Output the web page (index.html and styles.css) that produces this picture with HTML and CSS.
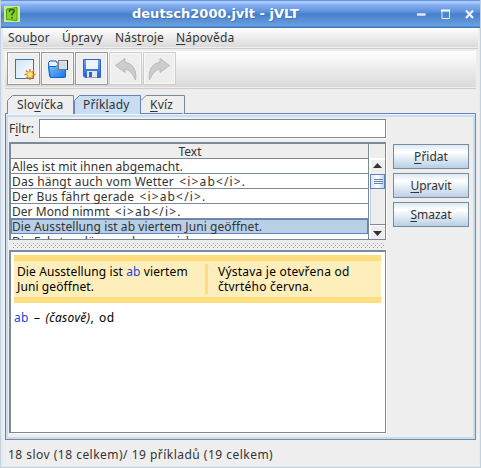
FILE: index.html
```html
<!DOCTYPE html>
<html lang="cs">
<head>
<meta charset="utf-8">
<title>deutsch2000.jvlt - jVLT</title>
<link rel="stylesheet" href="styles.css">
</head>
<body>
<div class="window">
  <header class="titlebar">
    <svg class="app-icon" width="16" height="16" viewBox="0 0 16 16"><rect width="16" height="16" fill="#c5ef8c"/><path d="M2.500 3L13 1.500V14.500L2.500 13.500Z" fill="#85d32a" stroke="#529914"/><path d="M5.500 6V4.200Q8 3 10 4.200V6L8 8V9.500M8 11V12.500" fill="none" stroke="#2f5210" stroke-width="1.500"/></svg>
    <h1 class="title">deutsch2000.jvlt - jVLT</h1>
    <svg class="controls" width="60" height="12" viewBox="0 0 60 12"><path d="M3 6.500H9.500" stroke="#e5e9ef" stroke-width="2.500" stroke-linecap="round"/><path d="M27 3V10.500H34.500V3" fill="none" stroke="#e8ecf0"/><path d="M26 2.500H35" stroke="#fff" stroke-width="2"/><path d="M51 2.500L58 10M58 2.500L51 10" stroke="#f0f2f5" stroke-width="2.200"/></svg>
  </header>
  <nav class="menubar">
    <span class="m1">Sou<u>b</u>or</span><span class="m2">Úp<u>r</u>avy</span><span class="m3">Nás<u>t</u>roje</span><span class="m4"><u>N</u>ápověda</span>
  </nav>
  <div class="toolbar">
    <button class="tool"><svg width="29" height="29" viewBox="0 0 29 29"><defs><linearGradient id="pg" x2="1" y2="1"><stop stop-color="#cfe4f6"/><stop offset="1" stop-color="#fff"/></linearGradient></defs><rect x="6.500" y="5.500" width="18" height="19" fill="url(#pg)" stroke="#3a74ae"/><path d="M21 15v11M15.500 20.500h11M17 16.500l8 8M25 16.500l-8 8" stroke="#d87a20" stroke-width="1.500"/><circle cx="21" cy="20.500" r="3" fill="#ffe477" stroke="#f2a33a"/></svg></button>
    <button class="tool"><svg width="29" height="29" viewBox="0 0 29 29"><defs><linearGradient id="fg" x2="1" y2="1"><stop stop-color="#7cc6ff"/><stop offset="1" stop-color="#1a74e0"/></linearGradient></defs><path d="M5.500 8.500L7 7H13L14 9H22.500V23L21 23.500H8L6.500 22Z" fill="#e8f3ff" stroke="#0758c5"/><path d="M5.500 12.500H13L15 10.500H22.500V22L21 23.500H7.500Z" fill="url(#fg)" stroke="#1262cc"/><rect x="15.500" y="6.500" width="9" height="9" fill="#d9e6f2" fill-opacity=".9" stroke="#777"/><path d="M24.500 6V16" stroke="#333"/></svg></button>
    <button class="tool"><svg width="29" height="29" viewBox="0 0 29 29"><defs><linearGradient id="sg" x2="0" y2="1"><stop stop-color="#68a0ff"/><stop offset="1" stop-color="#2460d5"/></linearGradient></defs><path d="M6.500 5.500H23.500V23.500H8L6.500 22Z" fill="url(#sg)" stroke="#3263c4"/><rect x="9" y="6" width="12" height="9" fill="#eef5ff"/><rect x="10" y="17" width="10" height="6.500" fill="#e5e5ee"/><rect x="12" y="18" width="3" height="5" fill="#2d61c9"/></svg></button>
    <button class="tool off"><svg width="29" height="29" viewBox="0 0 29 29"><path d="M4.500 11.500L14 4.500V8.500C22 9 26 17 24.500 26C22 20 19 16 14 15V18.500Z" fill="#cdcdcd" stroke="#b8b8b8"/></svg></button>
    <button class="tool off"><svg width="29" height="29" viewBox="0 0 29 29"><path d="M24.500 11.500L15 4.500V8.500C7 9 3 17 4.500 26C7 20 10 16 15 15V18.500Z" fill="#cdcdcd" stroke="#b8b8b8"/></svg></button>
  </div>
  <div class="tabs">
    <div class="tab t1"><svg width="67" height="19"><path class="edge" d="M.5 19V5.500L5.500.500H66.500V19"/></svg><span>Slo<u>v</u>íčka</span></div>
    <div class="tab t2"><svg width="67" height="19"><path class="edge on" d="M.5 19V5.500L5.500.500H66.500V19"/></svg><span>Přík<u>l</u>ady</span></div>
    <div class="tab t3"><svg width="44" height="19"><path class="edge" d="M0 5.500L5 .500H43.500V19"/></svg><span><u>K</u>víz</span></div>
  </div>
  <main class="panel">
    <section class="left">
      <div class="filter"><label>F<u>i</u>ltr:</label><div class="input"></div></div>
      <div class="table">
        <div class="rows">
          <div class="head">Text</div>
          <div class="row">Alles ist mit ihnen abgemacht.</div>
          <div class="row wide">Das hängt auch vom Wetter <span class="tag">&lt;i&gt;ab&lt;/i&gt;.</span></div>
          <div class="row wide">Der Bus fährt gerade <span class="tag">&lt;i&gt;ab&lt;/i&gt;.</span></div>
          <div class="row">Der Mond nimmt <span class="tag">&lt;i&gt;ab&lt;/i&gt;.</span></div>
          <div class="row sel">Die Ausstellung ist ab viertem Juni geöffnet.</div>
          <div class="row">Die Fahrt verlängern lassen sich.</div>
        </div>
        <div class="scroll">
          <div class="corner"></div>
          <div class="arrow"><svg width="15" height="14"><path d="M3 9L7.500 4L12 9Z" fill="#333"/></svg></div>
          <div class="thumb"></div>
          <div class="track"></div>
          <div class="arrow down"><svg width="15" height="14"><path d="M3 6L7.500 11L12 6Z" fill="#333"/></svg></div>
        </div>
      </div>
      <div class="splitter"><svg width="376" height="6"><defs><pattern id="dots" width="4" height="4" patternUnits="userSpaceOnUse"><rect width="1" height="1" fill="#9a9a9a"/><rect x="2" y="2" width="1" height="1" fill="#9a9a9a"/></pattern></defs><rect x="3" width="373" height="5" fill="url(#dots)"/></svg></div>
      <div class="detail">
        <div class="example">
          <p class="de">Die Ausstellung ist <b>ab</b> viertem<br>Juni geöffnet.</p>
          <p class="cs">Výstava je otevřena od<br>čtvrtého června.</p>
        </div>
        <p class="entry"><b>ab</b> – <i>(časově)</i>, od</p>
      </div>
    </section>
    <aside class="actions">
      <button class="btn"><u>P</u>řidat</button>
      <button class="btn"><u>U</u>pravit</button>
      <button class="btn"><u>S</u>mazat</button>
    </aside>
  </main>
  <footer class="status">18 slov (18 celkem)/ 19 příkladů (19 celkem)</footer>
</div>
</body>
</html>
```

FILE: styles.css
```css
* { box-sizing: border-box; }
body { margin: 0; font: 12px/15px "Noto Sans", sans-serif; color: #333; }
p, h1 { margin: 0; }
u { text-decoration: underline; text-underline-offset: 2px; text-decoration-thickness: 1px; text-decoration-skip-ink: none; }
button { font: inherit; color: inherit; padding: 0; }
.window { width: 481px; height: 468px; background: #eee; border: solid #c3d2e1; border-width: 0 1px 1px; box-shadow: inset 2px -1px #e3eaf1, inset -1px 0 #e3eaf1; overflow: hidden; }
.titlebar { height: 28px; margin: 0 -1px; padding: 0 6px 0 4px; display: flex; align-items: center; background: linear-gradient(#6795dd 0 1px, #a6c8fb 1px 3px, #85aeee 5px, #5b91dd 12px, #477fc9 14px, #6aa0e2 26px, #3f77bb 27px); }
.app-icon { flex: none; }
.title { flex: 1; padding-right: 4px; text-align: center; white-space: nowrap; font: bold 13px/28px "DejaVu Sans", sans-serif; color: #fff; text-shadow: 1px 1px #4475b5; }
.controls { flex: none; }
.menubar { height: 21px; margin: 0 2px; padding: 2px 0 0 5px; display: flex; letter-spacing: .15px; background: linear-gradient(#fff, #dadada 19px, #eee 19px 20px, #ccc 20px); }
.menubar span { white-space: nowrap; }
.m1 { width: 54px; } .m2 { width: 53px; } .m3 { width: 61px; }
.toolbar { height: 38px; margin: 2px 4px 0; padding: 1px 0 0 2px; display: flex; gap: 1px; background: linear-gradient(#fff, #dadada 36px, #eee 36px 37px, #ccc 37px); }
.tool { width: 33px; height: 33px; border: 1px solid #999; background: #eee; box-shadow: inset 0 0 0 1px #f8f8f8; display: grid; place-items: center; }
.tool.off { border-color: #ccc; }
.tabs { height: 19px; margin: 6px 0 0 6px; display: flex; letter-spacing: .2px; }
.tab { position: relative; height: 19px; }
.tab svg { display: block; }
.tab span { position: absolute; left: 10px; top: 2px; white-space: nowrap; }
.t2 span, .t3 span { left: 9px; }
.edge { fill: #eee; stroke: #7a8a99; }
.edge.on { fill: #c8ddf2; stroke: #6382bf; }
.panel { margin: -1px 4px 0; height: 327px; display: flex; border: 1px solid #6382bf; padding: 3px 5px 0 3px; gap: 6px; box-shadow: inset 0 1px #eef5fc, inset 2px 3px #c8ddf2, inset -2px -2px #c8ddf2; border-right-color: #7a8a99; border-bottom-color: #7a8a99; }
.left { width: 378px; }
.filter { display: flex; height: 21px; padding-top: 2px; margin-bottom: 4px; }
.filter label { width: 30px; padding-top: 2px; }
.input { width: 348px; height: 19px; background: #fff; border: 1px solid #7a8a99; box-shadow: 1px 1px #fff; margin-right: 1px; }
.table { width: 377px; height: 98px; border: 1px solid #7a8a99; border-width: 2px 1px 1px 2px; box-shadow: 1px 1px #fff; display: flex; background: #fff; overflow: hidden; }
.rows { width: 359px; border-right: 1px solid #7a8a99; white-space: nowrap; overflow: hidden; }
.head, .row { height: 15px; border-bottom: 1px solid #7a8a99; padding-left: 1px; line-height: 15px; letter-spacing: .04px; }
.head { text-align: center; background: #eee; }
.row.wide { letter-spacing: .2px; }
.row .tag { letter-spacing: 1.15px; margin-left: 2px; }
.row.sel { background: #b8cfe5; border: 1px solid #6382bf; padding-left: 0; line-height: 14px; letter-spacing: .08px; }
.scroll { flex: 1; background: #eee; display: flex; flex-direction: column; border-left: 1px solid #fff; }
.corner { height: 15px; border-bottom: 1px solid #fff; }
.arrow { height: 15px; box-shadow: inset 1px 1px #fff; }
.arrow.down { border-top: 1px solid #7a8a99; }
.thumb { height: 15px; border: 1px solid #6382bf; background: linear-gradient(#6382bf, #6382bf) 3px 4px / 9px 1px no-repeat, linear-gradient(#6382bf, #6382bf) 3px 6px / 9px 1px no-repeat, linear-gradient(#6382bf, #6382bf) 3px 8px / 9px 1px no-repeat, linear-gradient(90deg, #d6e6f5, #fff, #c2d6e9); }
.track { flex: 1; border-left: 1px solid #b8cfe5; }
.splitter { height: 10px; padding-top: 3px; background: #eee; }
.splitter svg { display: block; }
.detail { width: 377px; height: 183px; padding: 3px; border: 1px solid #7a8a99; border-width: 2px 1px 1px 2px; box-shadow: 1px 1px #fff; background: #fff; color: #000; }
.detail b { font-weight: normal; color: #2244dd; }
.example { width: 367px; height: 48px; border: solid #fddd7e; border-width: 6px 0; background: #fdeebc; display: flex; padding: 3px; white-space: nowrap; }
.de { width: 191px; border-right: 3px solid #fddd7e; letter-spacing: .1px; }
.cs { padding-left: 10px; letter-spacing: .22px; }
.entry { padding: 7px 0 0; letter-spacing: .3px; word-spacing: 1.8px; }
.actions { width: 76px; display: flex; flex-direction: column; gap: 4px; padding-top: 27px; }
.btn { height: 25px; border: 1px solid #7a8a99; background: linear-gradient(#dce9f5, #fff 30%, #b8cfe5); }
.status { padding: 7px 0 0 7px; letter-spacing: .48px; }
```
